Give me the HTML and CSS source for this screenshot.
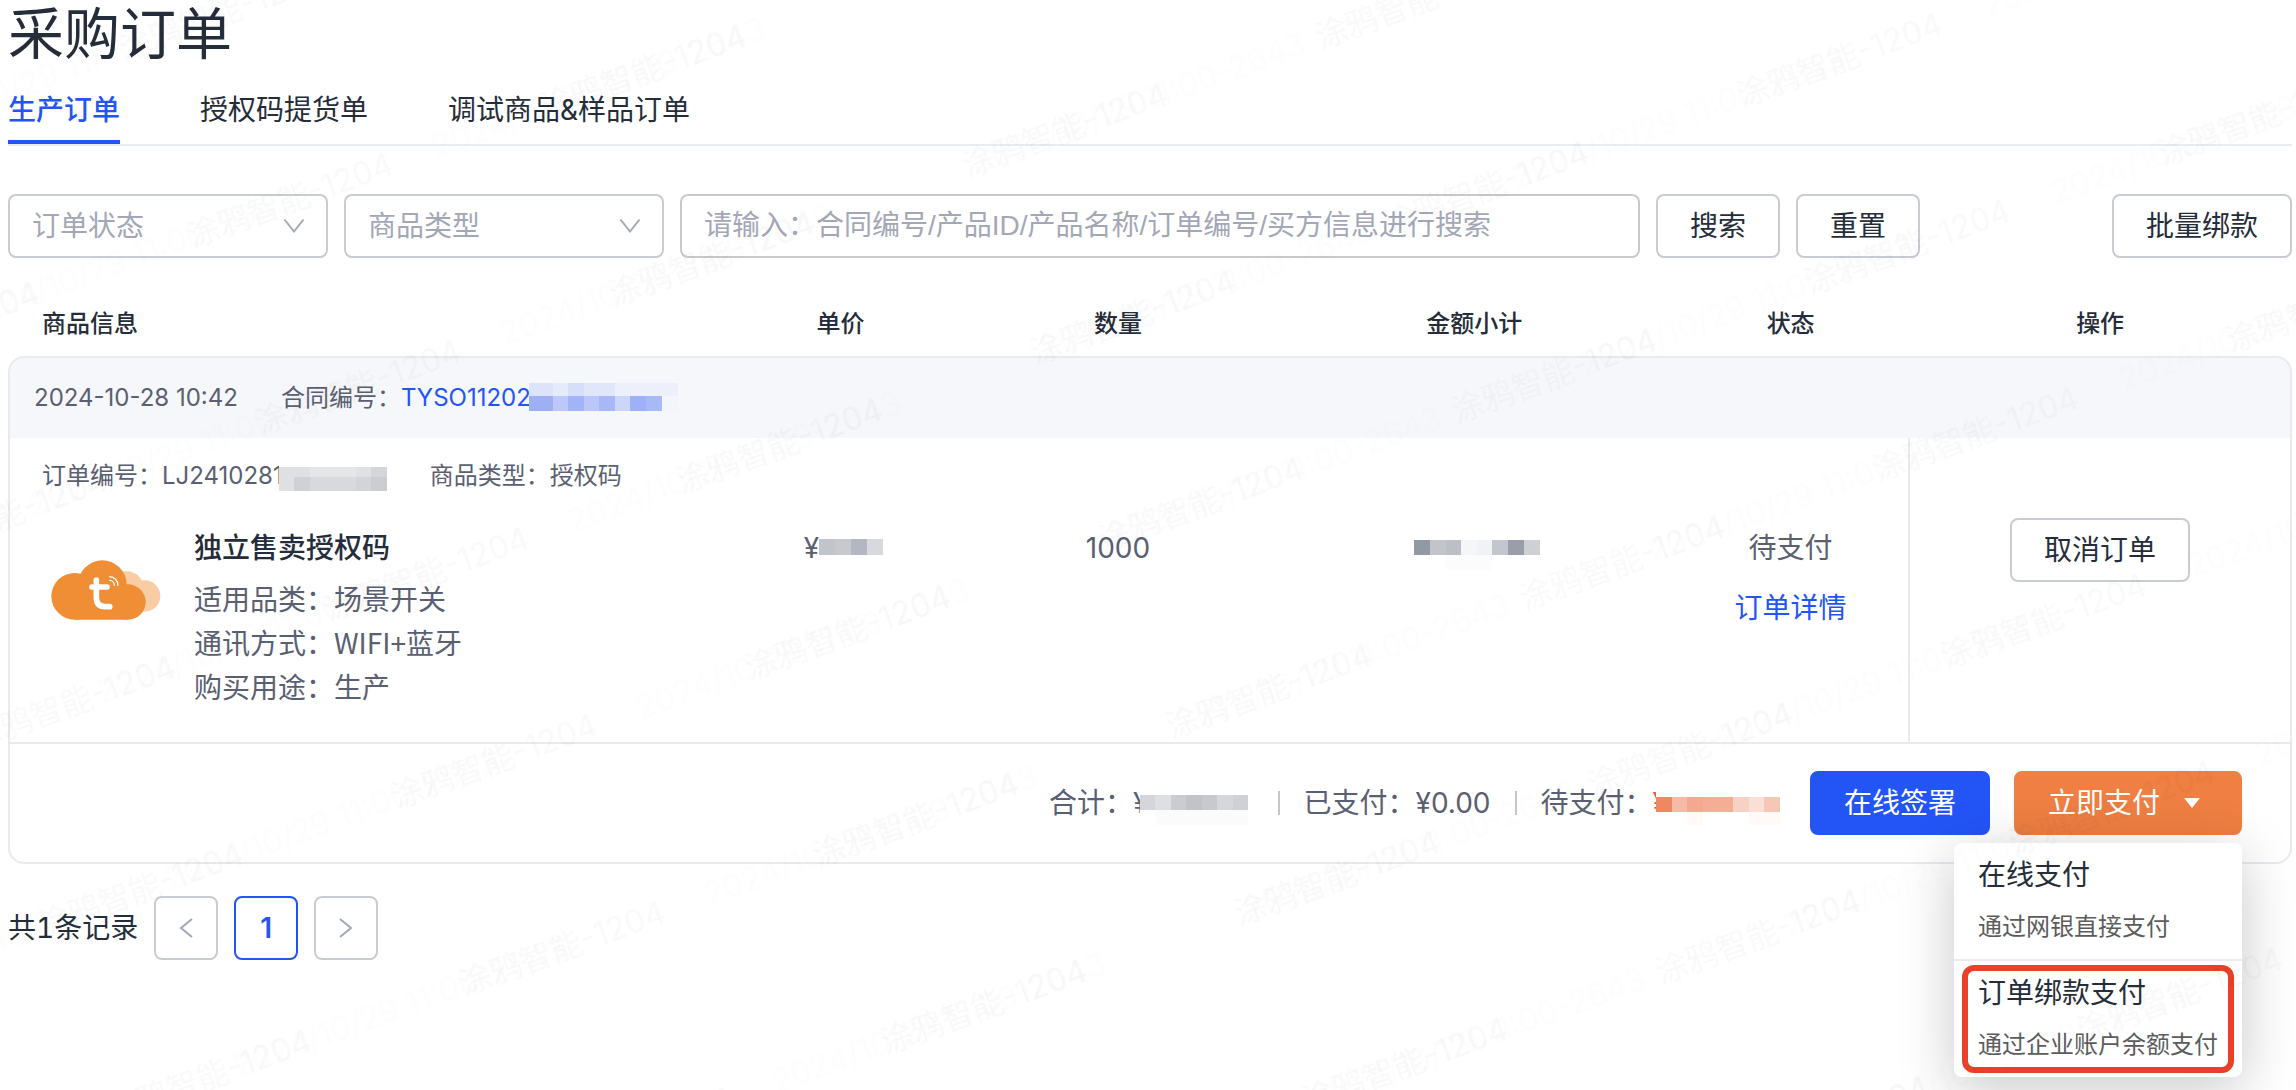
FILE: index.html
```html
<!DOCTYPE html>
<html lang="zh-CN">
<head>
<meta charset="utf-8">
<meta name="viewport" content="width=device-width, initial-scale=1">
<title>采购订单</title>
<link rel="stylesheet" href="styles.css">
</head>
<body>
<main class="page">
  <h1 class="page-title">采购订单</h1>

  <nav class="tabs">
    <a class="tab tab-active" href="#production">生产订单</a>
    <a class="tab" href="#license">授权码提货单</a>
    <a class="tab" href="#sample">调试商品&amp;样品订单</a>
  </nav>

  <form class="filters">
    <div class="select-box">
      <select class="field select" aria-label="订单状态"><option>订单状态</option></select>
      <svg class="chevron" viewBox="0 0 22 16" aria-hidden="true"><path d="M1.500 1.500 11 13.500 20.500 1.500"/></svg>
    </div>
    <div class="select-box">
      <select class="field select" aria-label="商品类型"><option>商品类型</option></select>
      <svg class="chevron" viewBox="0 0 22 16" aria-hidden="true"><path d="M1.500 1.500 11 13.500 20.500 1.500"/></svg>
    </div>
    <input class="field keyword" type="text" aria-label="搜索" placeholder="请输入：合同编号/产品ID/产品名称/订单编号/买方信息进行搜索">
    <button class="btn" type="button">搜索</button>
    <button class="btn" type="button">重置</button>
    <button class="btn btn-end" type="button">批量绑款</button>
  </form>

  <table class="orders">
    <colgroup>
      <col class="col-info"><col class="col-price"><col class="col-qty"><col class="col-amount"><col class="col-status"><col class="col-action">
    </colgroup>
    <thead>
      <tr>
        <th class="th-info">商品信息</th><th>单价</th><th>数量</th><th>金额小计</th><th>状态</th><th>操作</th>
      </tr>
    </thead>
    <tbody>
      <tr>
        <td class="band" colspan="6">
          <div class="line meta">
            <span>2024-10-28 10:42</span>
            <span class="pair">合同编号：<a class="link pair" href="#contract">TYSO11202<svg class="mask mask-band" width="149" height="44" viewBox="0 0 149 44" aria-hidden="true">
              <path fill="#dde3f9" d="M0 7h24v13H0z"/><path fill="#e6ebfb" d="M24 7h15v13H24z"/><path fill="#d7defa" d="M39 7h16v13H39z"/><path fill="#e1e6fa" d="M55 7h31v13H55z"/><path fill="#edf0fa" d="M86 7h63v13H86z"/>
              <path fill="#9eaff6" d="M0 20h24v15H0z"/><path fill="#bcc8fa" d="M24 20h15v15H24z"/><path fill="#a3b3f7" d="M39 20h16v15H39z"/><path fill="#bbc7fa" d="M55 20h15v15H55z"/><path fill="#a8b7f8" d="M70 20h16v15H70z"/><path fill="#ccd5fa" d="M86 20h15v15H86z"/><path fill="#9fb0f8" d="M101 20h16v15h-16z"/><path fill="#a8b8f9" d="M117 20h16v15h-16z"/><path fill="#f3f5fb" d="M133 20h16v15h-16z"/>
            </svg></a></span>
          </div>
        </td>
      </tr>
      <tr>
        <td class="order-no" colspan="5">
          <div class="line meta">
            <span class="pair">订单编号：LJ2410281<svg class="mask mask-order" width="108" height="44" viewBox="0 0 108 44" aria-hidden="true">
              <path fill="#dfe0e3" d="M0 13h31v10H0z"/><path fill="#e5e6e8" d="M31 13h46v10H31z"/><path fill="#e0e1e4" d="M77 13h15v10H77z"/><path fill="#d5d6da" d="M92 13h16v10H92z"/>
              <path fill="#dfe0e3" d="M0 23h15v14H0z"/><path fill="#d0d1d5" d="M15 23h16v14H15z"/><path fill="#d8d9dc" d="M31 23h46v14H31z"/><path fill="#d3d4d8" d="M77 23h15v14H77z"/><path fill="#cccdd2" d="M92 23h16v14H92z"/>
            </svg></span>
            <span>商品类型：授权码</span>
          </div>
        </td>
        <td class="actions" rowspan="2"><button class="btn" type="button">取消订单</button></td>
      </tr>
      <tr class="product-row">
        <td class="td-info">
          <div class="product">
            <svg class="logo" viewBox="64 92 330 180" role="img" aria-label="涂鸦云">
              <g fill="#f9cca4"><circle cx="291" cy="178" r="52"/><circle cx="345" cy="200" r="47"/></g>
              <g fill="#ef8e34"><circle cx="135" cy="201" r="70"/><circle cx="218" cy="166" r="73"/><circle cx="295" cy="218" r="53"/><path d="M135 180H295V271H135z"/></g>
              <g fill="none" stroke="#fff" stroke-linecap="round">
                <path stroke-width="17" d="M200 152V204Q200 232 226 232H240M187 173H232"/>
                <path stroke-width="4" d="M240 142A26 26 0 0 1 265 168M240 153A15 15 0 0 1 254 168"/>
              </g>
            </svg>
            <div>
              <h2 class="product-name">独立售卖授权码</h2>
              <p class="line">适用品类：场景开关</p>
              <p class="line">通讯方式：<span class="latin">WIFI+</span>蓝牙</p>
              <p class="line">购买用途：生产</p>
            </div>
          </div>
        </td>
        <td>
          <div class="line pair centered">¥<svg class="mask" width="64" height="44" viewBox="0 0 64 44" aria-hidden="true"><path fill="#c1c4cb" d="M0 13h16v16H0z"/><path fill="#c8c9ce" d="M16 13h16v16H16z"/><path fill="#b3b7c1" d="M32 13h16v16H32z"/><path fill="#d8d9de" d="M48 13h16v16H48z"/></svg></div>
        </td>
        <td><div class="line">1000</div></td>
        <td>
          <div class="line pair centered"><svg class="mask" width="126" height="44" viewBox="0 0 126 44" role="img" aria-label="金额已隐藏"><path fill="#9398a5" d="M0 14h16v15H0z"/><path fill="#c3c4ca" d="M16 14h16v15H16z"/><path fill="#bdbfc6" d="M32 14h15v15H32z"/><path fill="#f5f6f7" d="M47 14h16v15H47z"/><path fill="#f1f2f5" d="M63 14h15v15H63z"/><path fill="#c3c6cd" d="M78 14h16v15H78z"/><path fill="#999eaa" d="M94 14h16v15H94z"/><path fill="#cfd0d5" d="M110 14h16v15h-16z"/><path fill="#fcfcfd" d="M32 29h46v15H32z"/></svg></div>
        </td>
        <td>
          <div class="status"><span class="line">待支付</span><a class="line link" href="#detail">订单详情</a></div>
        </td>
      </tr>
      <tr>
        <td class="summary" colspan="6">
          <div class="summary-row">
            <span class="pair total">合计：¥<svg class="mask mask-total" width="108" height="44" viewBox="0 0 108 44" aria-hidden="true"><path fill="#d5d6db" d="M0 14h15v15H0z"/><path fill="#dedfe3" d="M15 14h16v15H15z"/><path fill="#cbccd1" d="M31 14h15v15H31z"/><path fill="#c2c3c9" d="M46 14h16v15H46z"/><path fill="#c8c9cf" d="M62 14h15v15H62z"/><path fill="#d6d7dc" d="M77 14h16v15H77z"/><path fill="#d0d1d7" d="M93 14h15v15H93z"/><path fill="#fbfbfc" d="M15 29h93v15H15z"/></svg></span>
            <span class="rule"></span>
            <span>已支付：¥0.00</span>
            <span class="rule"></span>
            <span class="pair">待支付：<span class="due">¥</span><svg class="mask mask-due" width="124" height="44" viewBox="0 0 124 44" aria-hidden="true"><path fill="#ee8862" d="M0 16h16v15H0z"/><path fill="#f5bba8" d="M16 16h15v15H16z"/><path fill="#f2a98f" d="M31 16h16v15H31z"/><path fill="#f3ae95" d="M47 16h30v15H47z"/><path fill="#f8d1c5" d="M77 16h16v15H77z"/><path fill="#fadfd7" d="M93 16h15v15H93z"/><path fill="#f6c6b7" d="M108 16h16v15h-16z"/><path fill="#fff9f7" d="M31 31h16v13H31zM93 31h31v13H93z"/></svg></span>
            <div class="summary-actions">
              <button class="btn btn-primary" type="button">在线签署</button>
              <div class="pay">
                <button class="btn btn-pay" type="button" aria-expanded="true">立即支付<svg class="caret" viewBox="0 0 16 10" aria-hidden="true"><path fill="#fff" d="M0 0h16L8 10z"/></svg></button>
                <div class="menu">
                  <button class="menu-item" type="button"><span class="menu-title">在线支付</span><span class="menu-note">通过网银直接支付</span></button>
                  <button class="menu-item menu-marked" type="button"><span class="menu-title">订单绑款支付</span><span class="menu-note">通过企业账户余额支付</span></button>
                </div>
              </div>
            </div>
          </div>
        </td>
      </tr>
    </tbody>
  </table>

  <div class="pager">
    <span class="pager-total">共1条记录</span>
    <button class="page-btn" type="button" aria-label="上一页"><svg class="arrow" viewBox="0 0 14 20" aria-hidden="true"><path d="M13 1 2 10 13 19"/></svg></button>
    <button class="page-btn page-current" type="button">1</button>
    <button class="page-btn" type="button" aria-label="下一页"><svg class="arrow" viewBox="0 0 14 20" aria-hidden="true"><path d="M1 1 12 10 1 19"/></svg></button>
  </div>
</main>

<svg class="watermark" aria-hidden="true">
  <defs>
    <pattern id="wm-name" width="376" height="199" patternUnits="userSpaceOnUse" patternTransform="translate(153 198) rotate(-20)">
      <text class="wm-text" x="20" y="60">涂鸦智能-1204</text>
    </pattern>
    <pattern id="wm-time" x="130" width="502" height="199" patternUnits="userSpaceOnUse" patternTransform="translate(153 198) rotate(-20)">
      <text class="wm-text wm-faint" x="150" y="60">2024/10/29 11:00-2643</text>
    </pattern>
  </defs>
  <rect width="100%" height="100%" fill="url(#wm-time)"/>
  <rect width="100%" height="100%" fill="url(#wm-name)"/>
</svg>
</body>
</html>
```

FILE: styles.css
```css
* {
  box-sizing: border-box;
}

body {
  margin: 0;
  min-height: 100vh;
  background: #fff;
  color: #262d3a;
  font-family: Inter, "Noto Sans CJK SC", sans-serif;
  font-size: 28px;
  line-height: 44px;
}

button,
input,
select {
  font: inherit;
  color: inherit;
}

h1,
h2,
p {
  margin: 0;
}

.page {
  padding: 0 4px 0 8px;
}

.page-title {
  font-size: 56px;
  font-weight: 400;
  line-height: 68px;
}

/* Tabs */
.tabs {
  display: flex;
  gap: 80px;
  padding-top: 20px;
  border-bottom: 2px solid #e9edf1;
}

.tab {
  padding-bottom: 8px;
  border-bottom: 4px solid transparent;
  color: inherit;
  text-decoration: none;
}

.tab-active {
  border-color: #2354f6;
  color: #2354f6;
  font-weight: 500;
}

/* Filters */
.filters {
  display: flex;
  gap: 16px;
  padding-top: 48px;
}

.field,
.btn,
.page-btn {
  height: 64px;
  border: 2px solid #c9ccd3;
  border-radius: 8px;
  background: #fff;
}

.select-box {
  display: grid;
  flex: 0 1 320px;
  align-items: center;
}

.select {
  grid-area: 1 / 1;
  width: 100%;
  padding: 0 56px 0 22px;
  appearance: none;
  color: #a3a7b7;
}

.chevron {
  grid-area: 1 / 1;
  justify-self: end;
  width: 22px;
  height: 16px;
  margin-right: 23px;
  pointer-events: none;
}

.chevron path,
.arrow path {
  fill: none;
  stroke: #a3a7b7;
  stroke-width: 2;
}

.keyword {
  flex: 0 1 960px;
  min-width: 0;
  padding: 0 22px;
  border-color: #c9c9c9;
  font-family: "Liberation Sans", "Noto Sans CJK SC", sans-serif;
}

.keyword::placeholder {
  color: #a3a7b7;
  opacity: 1;
}

.btn {
  flex: none;
  padding: 0 32px;
  color: #262d3a;
  white-space: nowrap;
}

.btn-end {
  margin-left: auto;
}

/* Orders table */
.orders {
  width: 100%;
  margin-top: 34px;
  border-spacing: 0;
  table-layout: fixed;
  color: #5a6072;
}

.col-info { width: 31.2%; }
.col-price { width: 10.5%; }
.col-qty { width: 13.8%; }
.col-amount { width: 17.4%; }
.col-status { width: 10.3%; }
.col-action { width: 16.8%; }

.orders th {
  height: 64px;
  padding: 0;
  color: #262d3a;
  font-size: 24px;
  font-weight: 500;
}

.orders .th-info {
  padding-left: 34px;
  text-align: left;
}

.orders td {
  padding: 0;
  border: 0 solid #e9eaee;
  text-align: center;
  vertical-align: top;
}

.orders .band {
  padding: 18px 24px;
  border-width: 2px 2px 0;
  border-radius: 16px 16px 0 0;
  background: #f6f7fa;
}

.orders .order-no {
  padding: 16px 32px 8px;
  border-left-width: 2px;
}

.orders .actions {
  padding-top: 80px;
  border-width: 0 2px;
}

.product-row td {
  padding: 20px 0 32px;
}

.orders .td-info {
  padding-left: 41px;
  border-left-width: 2px;
  text-align: left;
}

.line {
  line-height: 44px;
}

.latin {
  font-family: "Noto Sans CJK SC", sans-serif;
  line-height: 1;
}

.meta {
  display: flex;
  gap: 43px;
  font-size: 24px;
}

.pair {
  display: inline-flex;
}

.centered {
  display: flex;
  justify-content: center;
  padding-left: 6px;
}

/* Mosaic that hides part of a value; overlaps the character before it */
.mask {
  display: block;
  flex: none;
  background: #fff;
}

.mask-band {
  margin-left: -2px;
  background: #f6f7fa;
}

.mask-order {
  margin-left: -4px;
}

.mask-total {
  margin-left: -9px;
}

.mask-due {
  margin-left: -12px;
}

.total {
  margin-right: 6px;
}

.due {
  color: #ea5a28;
}

.link {
  color: #2354f6;
  text-decoration: none;
}

.product {
  display: flex;
  gap: 33px;
}

.logo {
  flex: none;
  width: 110px;
  height: 60px;
  margin-top: 34px;
}

.product-name {
  margin-bottom: 8px;
  color: #262d3a;
  font-size: 28px;
  font-weight: 500;
  line-height: 44px;
}

.status {
  display: grid;
  gap: 16px;
  justify-items: center;
}

/* Summary */
.orders .summary {
  padding: 27px 48px 27px 24px;
  border-width: 2px;
  border-radius: 0 0 16px 16px;
}

.summary-row {
  display: flex;
  align-items: center;
  justify-content: flex-end;
}

.rule {
  width: 2px;
  height: 24px;
  margin: 0 24px;
  background: #c4c6cc;
}

.summary-actions {
  display: flex;
  gap: 24px;
  margin-left: 30px;
}

.btn-primary {
  border-color: #2354f6;
  background: #2354f6;
  color: #fff;
}

.pay {
  position: relative;
}

.btn-pay {
  display: flex;
  gap: 24px;
  align-items: center;
  padding: 0 40px 0 32px;
  border-color: #ef7f42;
  background: #ef7f42;
  color: #fff;
}

.caret {
  width: 16px;
  height: 10px;
}

/* Payment menu */
.menu {
  position: absolute;
  z-index: 1;
  top: calc(100% + 8px);
  right: 0;
  width: 288px;
  border-radius: 8px;
  background: #fff;
  box-shadow: 0 12px 56px rgba(0, 0, 0, 0.22);
}

.menu-item {
  display: grid;
  gap: 12px;
  position: relative;
  width: 100%;
  padding: 12px 24px;
  border: 0;
  background: none;
  color: #262d3a;
  line-height: 40px;
  text-align: left;
  white-space: nowrap;
}

.menu-item + .menu-item {
  border-top: 2px solid #ebebeb;
}

.menu-note {
  color: #5c5c5c;
  font-size: 24px;
}

.menu-marked::after {
  content: "";
  position: absolute;
  inset: 4px 8px;
  border: 6px solid #ea4027;
  border-radius: 12px;
}

/* Pager */
.pager {
  display: flex;
  gap: 16px;
  align-items: center;
  padding-top: 32px;
}

.pager-total {
  font-variant-numeric: tabular-nums;
}

.page-btn {
  display: grid;
  place-items: center;
  width: 64px;
  padding: 0;
}

.page-current {
  border-color: #2354f6;
  color: #2354f6;
  font-weight: 600;
}

.arrow {
  width: 14px;
  height: 20px;
}

/* Watermark */
.watermark {
  position: fixed;
  z-index: 2;
  inset: 0;
  width: 100%;
  height: 100%;
  pointer-events: none;
}

.wm-text {
  font-size: 32px;
  fill: rgba(0, 0, 0, 0.025);
}

.wm-faint {
  fill: rgba(0, 0, 0, 0.008);
}
```
